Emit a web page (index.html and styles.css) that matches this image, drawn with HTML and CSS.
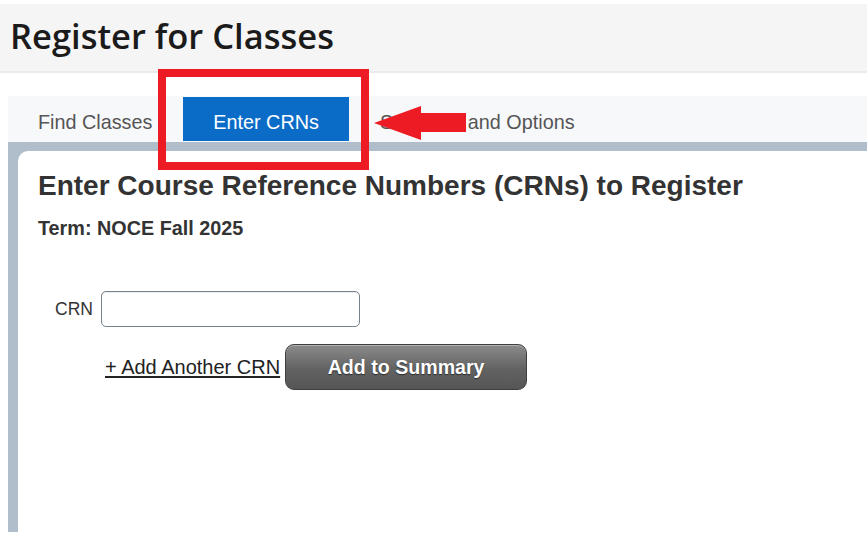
FILE: index.html
```html
<!DOCTYPE html>
<html lang="en">
<head>
<meta charset="utf-8">
<title>Register for Classes</title>
<link rel="stylesheet" href="styles.css">
</head>
<body>
<header class="page-header">
  <h1 class="page-title">Register for Classes</h1>
</header>
<main class="workspace">
  <nav class="tabs">
    <a class="tab">Find Classes</a>
    <a class="tab tab-active">Enter CRNs</a>
    <a class="tab">Schedule and Options</a>
  </nav>
  <section class="panel-frame">
    <div class="panel">
      <h2 class="panel-heading">Enter Course Reference Numbers (CRNs) to Register</h2>
      <p class="term">Term: NOCE Fall 2025</p>
      <div class="crn-row">
        <label class="crn-label" for="crn1">CRN</label>
        <input class="crn-input" id="crn1" type="text">
      </div>
      <div class="action-row">
        <a class="add-link" href="#">+ Add Another CRN</a>
        <button class="summary-btn" type="button">Add to Summary</button>
      </div>
    </div>
  </section>
</main>
<div class="annot-box"></div>
<svg class="annot-arrow" width="100" height="40" viewBox="0 0 100 40">
  <polygon points="0,18 47,1 47,8 92,8 92,27 47,27 47,35" fill="#ed1c24"/>
</svg>
</body>
</html>
```
FILE: styles.css
```css
html, body {
  margin: 0;
  padding: 0;
  background: #ffffff;
}
body {
  position: relative;
  width: 867px;
  height: 539px;
  box-sizing: border-box;
  padding-top: 4px;
  overflow: hidden;
  font-family: "Liberation Sans", Arial, sans-serif;
}
.page-header {
  height: 69px;
  box-sizing: border-box;
  padding: 9px 0 0 10px;
  background: #f5f5f5;
  border-bottom: 2px solid #ebebeb;
}
.page-title {
  margin: 0;
  font-family: "Open Sans", sans-serif;
  font-weight: 600;
  font-size: 34.5px;
  line-height: 46px;
  color: #1b1b1b;
}
.workspace {
  margin: 23px 0 0 8px;
}
.tabs {
  display: flex;
  gap: 1px;
  height: 46px;
  box-sizing: border-box;
  padding-top: 1px;
  background: #f7f8fa;
}
.tab {
  display: block;
  height: 44px;
  box-sizing: border-box;
  padding: 6px 30px 0;
  line-height: 38px;
  font-size: 19.8px;
  color: #555555;
  white-space: nowrap;
}
.tab-active {
  background: #0b6cc7;
  color: #ffffff;
}
.panel-frame {
  height: 390px;
  box-sizing: border-box;
  padding: 9px 0 0 10px;
  background: #b0bdca;
}
.panel {
  height: 100%;
  box-sizing: border-box;
  padding: 19px 0 0 20px;
  background: #ffffff;
  border-top-left-radius: 10px;
  color: #333333;
}
.panel-heading {
  margin: 0;
  font-size: 28px;
  line-height: 32px;
  font-weight: 700;
  color: #333333;
  white-space: nowrap;
}
.term {
  margin: 14px 0 0;
  font-size: 19.8px;
  line-height: 24px;
  font-weight: 700;
  color: #333333;
}
.crn-row {
  display: flex;
  align-items: center;
  gap: 8px;
  margin: 51px 0 0 17px;
}
.crn-label {
  font-size: 17.5px;
  color: #333333;
}
.crn-input {
  width: 259px;
  height: 36px;
  box-sizing: border-box;
  margin: 0;
  border: 1.5px solid #77828e;
  border-radius: 5px;
  background: #ffffff;
  box-shadow: inset 0 1px 1px rgba(0,0,0,0.08);
}
.action-row {
  display: flex;
  align-items: center;
  gap: 5px;
  margin: 17px 0 0 67px;
}
.add-link {
  font-size: 20px;
  color: #222222;
  text-decoration: underline;
  text-underline-offset: 2px;
}
.summary-btn {
  width: 242px;
  height: 46px;
  margin: 0;
  padding: 0;
  border: 1px solid #3f3f3f;
  border-radius: 9px;
  background: linear-gradient(#8b8b8b, #626262 55%, #565656);
  box-shadow: inset 0 1px 0 rgba(255,255,255,0.35);
  font-family: "Liberation Sans", Arial, sans-serif;
  font-size: 19.6px;
  font-weight: 700;
  color: #ffffff;
  text-shadow: 0 1px 1px #2a2a2a;
}
.annot-box {
  position: absolute;
  left: 158px;
  top: 69px;
  width: 211px;
  height: 101px;
  box-sizing: border-box;
  border: 8px solid #ed1c24;
}
.annot-arrow {
  position: absolute;
  left: 374px;
  top: 105px;
}
```
